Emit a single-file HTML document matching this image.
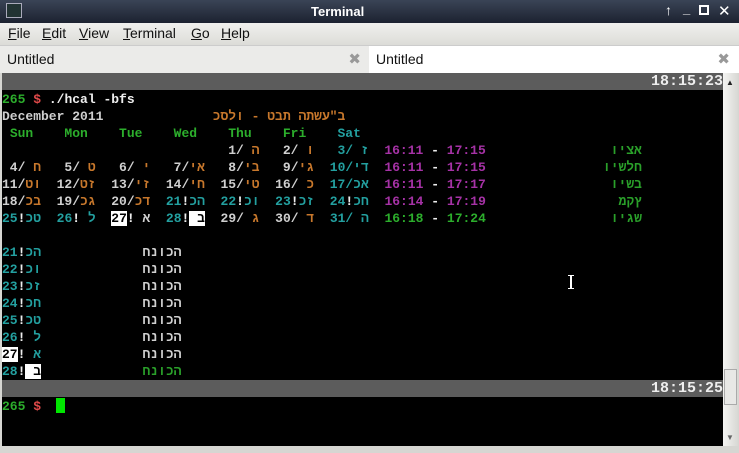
<!DOCTYPE html>
<html><head><meta charset="utf-8"><style>
*{margin:0;padding:0;box-sizing:border-box}
body{width:739px;height:453px;overflow:hidden;background:#d6d6d2;font-family:"Liberation Sans","DejaVu Sans",sans-serif;position:relative}
#title{position:absolute;left:0;top:0;width:739px;height:23px;background:linear-gradient(#3a4456,#1c2230);color:#fff;font-weight:bold;font-size:13px}
#menu{position:absolute;left:0;top:23px;width:739px;height:22px;background:linear-gradient(#f0f0ee,#dcdcd8);font-size:14px;color:#111}
#menu span{position:absolute;top:2px}
#menu u{text-decoration:underline}
.tab{position:absolute;top:45px;height:28px;font-size:14px;color:#111;padding:5px 0 0 7px}
#term{position:absolute;left:2px;top:73px;width:721px;height:373px;background:#000}
.bar{position:absolute;left:0;width:721px;height:17px;background:#5c5c5c;color:#eee;font:bold 15px "Liberation Mono",monospace;text-align:right;line-height:17px}
pre{position:absolute;left:0;font:bold 13px "Liberation Mono","DejaVu Sans Mono",monospace;line-height:17px;color:#d0d0d0;unicode-bidi:bidi-override;direction:ltr;white-space:pre}
.g{color:#2cae2c}.r{color:#e24a4a}.o{color:#c8782c}.t{color:#23a0a0}.p{color:#a632a6}.w{color:#eee}.inv{background:#fff;color:#000}.dg{color:#2aa02a}.gr{color:#cfcfcf}
#sb{position:absolute;left:723px;top:73px;width:15px;height:373px;background:linear-gradient(90deg,#f4f4f2,#d8d8d4)}
</style></head><body>
<div id="title">
<div style="position:absolute;left:6px;top:3px;width:16px;height:15px;background:#233;border:1px solid #aab;"></div>
<span style="position:absolute;left:311px;top:4px">Terminal</span>
<span style="position:absolute;left:665px;top:2px;font-size:14px">↑</span>
<span style="position:absolute;left:683px;top:1px;font-size:13px">_</span>
<span style="position:absolute;left:699px;top:5px;width:10px;height:10px;border:2px solid #fff"></span>
<span style="position:absolute;left:718px;top:2px;font-size:15px">✕</span>
</div>
<div id="menu">
<span style="left:8px"><u>F</u>ile</span><span style="left:42px"><u>E</u>dit</span><span style="left:79px"><u>V</u>iew</span><span style="left:123px"><u>T</u>erminal</span><span style="left:191px"><u>G</u>o</span><span style="left:221px"><u>H</u>elp</span>
</div>
<div class="tab" style="left:0;width:369px;background:#ebebe9;border-top:1px solid #ccc">Untitled<span style="position:absolute;right:8px;top:4px;color:#999;font-size:15px">✖</span></div>
<div class="tab" style="left:369px;width:370px;background:#fff;border-top:1px solid #ccc">Untitled<span style="position:absolute;right:9px;top:4px;color:#999;font-size:15px">✖</span></div>
<div id="term">
<div class="bar" style="top:0">18:15:23</div>
<pre style="top:18px"><span class="g">265</span> <span class="r">$</span> <span class="w">./hcal -bfs</span>
<span class="gr">December 2011</span>              <span class="o">כסלו - טבת התשע"ב</span>
 <span class="g">Sun    Mon    Tue    Wed    Thu    Fri    </span><span class="t">Sat</span>
                             1/ <span class="o">ה</span>   2/ <span class="o">ו</span>  <span class="t"> 3/ ז</span>  <span class="p">16:11</span> <span class="w">-</span> <span class="p">17:15</span>                <span class="dg">ויצא</span>
 4/ <span class="o">ח</span>   5/ <span class="o">ט</span>   6/ <span class="o">י</span>   7/<span class="o">יא</span>   8/<span class="o">יב</span>   9/<span class="o">יג</span>  <span class="t">10/יד</span>  <span class="p">16:11</span> <span class="w">-</span> <span class="p">17:15</span>               <span class="dg">וישלח</span>
11/<span class="o">טו</span>  12/<span class="o">טז</span>  13/<span class="o">יז</span>  14/<span class="o">יח</span>  15/<span class="o">יט</span>  16/ <span class="o">כ</span>  <span class="t">17/כא</span>  <span class="p">16:11</span> <span class="w">-</span> <span class="p">17:17</span>                <span class="dg">וישב</span>
18/<span class="o">כב</span>  19/<span class="o">כג</span>  20/<span class="o">כד</span>  <span class="t">21<span class="w">!</span>כה</span>  <span class="t">22<span class="w">!</span>כו</span>  <span class="t">23<span class="w">!</span>כז</span>  <span class="t">24<span class="w">!</span>כח</span>  <span class="p">16:14</span> <span class="w">-</span> <span class="p">17:19</span>                 <span class="dg">מקץ</span>
<span class="t">25<span class="w">!</span>כט</span>  <span class="t">26<span class="w">!</span> ל</span>  <span class="inv">27</span><span class="w">!</span> א  <span class="t">28<span class="w">!</span></span><span class="inv"> ב</span>  29/ <span class="o">ג</span>  30/ <span class="o">ד</span>  <span class="t">31/ ה</span>  <span class="g">16:18</span> <span class="w">-</span> <span class="g">17:24</span>                <span class="dg">ויגש</span>

<span class="t">21<span class="w">!</span>כה</span>             חנוכה
<span class="t">22<span class="w">!</span>כו</span>             חנוכה
<span class="t">23<span class="w">!</span>כז</span>             חנוכה
<span class="t">24<span class="w">!</span>כח</span>             חנוכה
<span class="t">25<span class="w">!</span>כט</span>             חנוכה
<span class="t">26<span class="w">!</span> ל</span>             חנוכה
<span class="inv">27</span><span class="w">!</span> <span class="t">א</span>             חנוכה
<span class="t">28<span class="w">!</span></span><span class="inv"> ב</span>             <span class="dg">חנוכה</span></pre>
<div class="bar" style="top:307px">18:15:25</div>
<pre style="top:325px"><span class="g">265</span> <span class="r">$</span> </pre>
<div style="position:absolute;left:54px;top:325px;width:9px;height:15px;background:#00e600"></div>
<div style="position:absolute;left:566px;top:202px;width:6px;height:14px;border:1px solid #fff;border-left:none;border-right:none"></div>
<div style="position:absolute;left:568px;top:202px;width:2px;height:14px;background:#fff"></div>
</div>
<div id="sb">
<div style="position:absolute;left:3px;top:5px;font-size:8px;color:#222">▲</div>
<div style="position:absolute;left:1px;top:296px;width:13px;height:36px;background:#e8e8e6;border:1px solid #aaa"></div>
<div style="position:absolute;left:3px;top:360px;font-size:8px;color:#666">▼</div>
</div>
</body></html>
